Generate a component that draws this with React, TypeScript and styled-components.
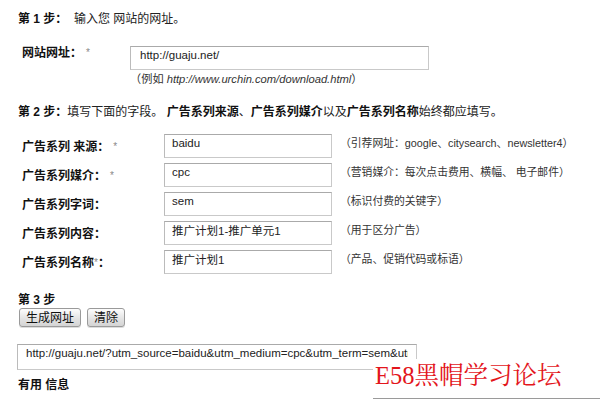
import React from "react";
import styled, {createGlobalStyle} from "styled-components";

const GlobalStyle = createGlobalStyle`
    html, body {
        margin: 0;
        padding: 0;
        background: #fff;
    }
    body {
        font-family: "Liberation Sans", "Noto Sans CJK SC", sans-serif;
        font-size: 12px;
        color: #222;
    }
`;

type Field = {
    label: string;
    required?: boolean;
    value: string;
    hint: string;
};

const campaignFields: Field[] = [
    {label: "广告系列 来源：", required: true, value: "baidu", hint: "（引荐网址：google、citysearch、newsletter4）"},
    {label: "广告系列媒介：", required: true, value: "cpc", hint: "（营销媒介：每次点击费用、横幅、 电子邮件）"},
    {label: "广告系列字词：", value: "sem", hint: "（标识付费的关键字）"},
    {label: "广告系列内容：", value: "推广计划1-推广单元1", hint: "（用于区分广告）"},
    {label: "广告系列名称", required: true, value: "推广计划1", hint: "（产品、促销代码或标语）"},
];

const resultUrl = "http://guaju.net/?utm_source=baidu&utm_medium=cpc&utm_term=sem&utm_content=%E6%8E%A8%E5%B9%BF";

const App = () => {
    return <Page>
        <GlobalStyle/>
        <StepTitle $top={11}>
            <b>第 1 步：</b>&nbsp; 输入您 网站的网址。
        </StepTitle>
        <SiteRow>
            <Label>网站网址：<Star>*</Star></Label>
            <div>
                <SiteInput readOnly value="http://guaju.net/"/>
                <Example>（例如 <i>http://www.urchin.com/download.html</i>）</Example>
            </div>
        </SiteRow>

        <StepTitle $top={18}>
            <b>第 2 步：</b>填写下面的字段。 <b>广告系列来源</b>、<b>广告系列媒介</b>以及<b>广告系列名称</b>始终都应填写。
        </StepTitle>
        <FieldGrid>
            {campaignFields.map(f => <React.Fragment key={f.label}>
                <Label $offset={6}>
                    {f.required && f.label === "广告系列名称"
                        ? <>{f.label}<Star $tight>*</Star>：</>
                        : <>{f.label}{f.required ? <Star>*</Star> : null}</>}
                </Label>
                <CampaignInput readOnly value={f.value}/>
                <Hint>{f.hint}</Hint>
            </React.Fragment>)}
        </FieldGrid>

        <StepTitle $top={18}><b>第 3 步</b></StepTitle>
        <Buttons>
            <Button>生成网址</Button>
            <Button>清除</Button>
        </Buttons>
        <ResultBox readOnly value={resultUrl}/>
        <StepTitle $top={7}><b>有用 信息</b></StepTitle>

        <Watermark>E58黑帽学习论坛</Watermark>
    </Page>
};

export default App;

const Page = styled.div`
    position: relative;
    width: 600px;
    height: 404px;
    overflow: hidden;
    padding-left: 18px;
    box-sizing: border-box;
`;

const StepTitle = styled.div<{ $top: number }>`
    margin-top: ${p => p.$top}px;
    line-height: 16px;
    color: #222;

    b {
        font-weight: bold;
        color: #111;
    }
`;

const SiteRow = styled.div`
    display: grid;
    grid-template-columns: 108px 1fr;
    margin-top: 19px;
    padding-left: 4px;
`;

const Label = styled.div<{ $offset?: number }>`
    font-weight: bold;
    color: #111;
    line-height: 14px;
    padding-top: ${p => p.$offset ?? 0}px;
    white-space: nowrap;
`;

const Star = styled.span<{ $tight?: boolean }>`
    font-weight: normal;
    color: #888;
    font-size: 10px;
    margin-left: ${p => p.$tight ? 0 : 4}px;
    vertical-align: top;
`;

const inputBase = `
    box-sizing: border-box;
    display: block;
    border: 1px solid #c9c9c9;
    border-top-color: #aaa;
    border-left-color: #bbb;
    background: #fff;
    font-family: "Liberation Sans", "Noto Sans CJK SC", sans-serif;
    font-size: 11.5px;
    color: #222;
    outline: none;
    margin: 0;
`;

const SiteInput = styled.input`
    ${inputBase};
    width: 299px;
    height: 24px;
    padding: 0 9px 6px;
`;

const Example = styled.div`
    margin-top: 2px;
    line-height: 14px;
    font-size: 11.2px;
    color: #333;

    i {
        font-style: italic;
    }
`;

const FieldGrid = styled.div`
    display: grid;
    grid-template-columns: 134px 168px 1fr;
    column-gap: 8px;
    row-gap: 5px;
    margin-top: 14px;
    padding-left: 4px;
    align-items: start;
`;

const CampaignInput = styled.input`
    ${inputBase};
    width: 168px;
    height: 24px;
    padding: 0 7px 7px;
`;

const Hint = styled.div`
    line-height: 14px;
    padding-top: 2px;
    font-size: 10.8px;
    color: #333;
    white-space: nowrap;
`;

const Buttons = styled.div`
    display: flex;
    gap: 6px;
    margin-top: 0;
    padding-left: 1px;
`;

const Button = styled.button`
    height: 19px;
    padding: 0 6px;
    border: 1px solid #9a9a9a;
    border-radius: 3px;
    background: linear-gradient(#fdfdfd, #e2e2e2 60%, #d4d4d4);
    font-family: "Liberation Sans", "Noto Sans CJK SC", sans-serif;
    font-size: 12px;
    line-height: 14px;
    color: #111;
    box-shadow: 0 1px 0 #ddd;
    cursor: pointer;
`;

const ResultBox = styled.input`
    ${inputBase};
    width: 400px;
    height: 26px;
    margin-top: 17px;
    margin-left: -1px;
    padding: 0 8px 8px;
`;

const Watermark = styled.div`
    position: absolute;
    left: 373px;
    top: 359px;
    width: 227px;
    height: 40px;
    padding-left: 2px;
    border-bottom: 1px solid #9a9a9a;
    font-family: "Liberation Serif", "Noto Serif CJK SC", "Noto Sans CJK SC", serif;
    font-size: 24.5px;
    line-height: 34px;
    color: #e3161c;
    background: #fff;
    box-sizing: border-box;
`;
